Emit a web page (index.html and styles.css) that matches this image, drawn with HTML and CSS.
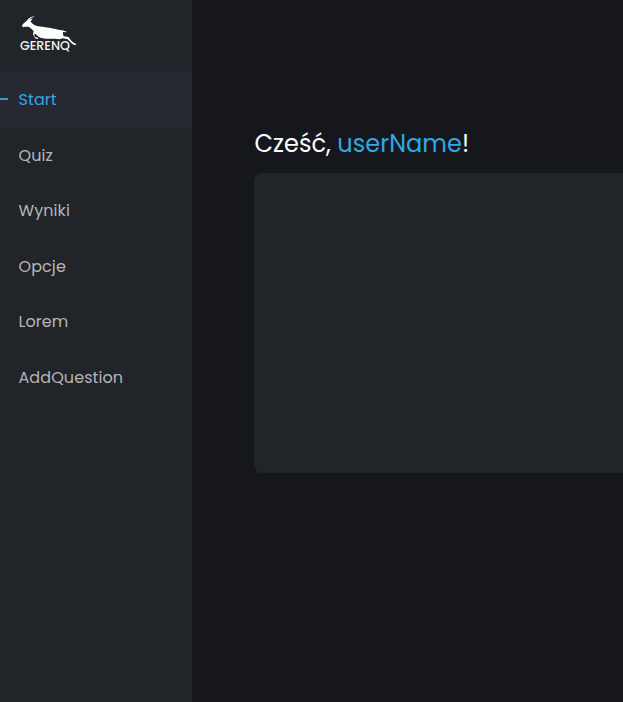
FILE: index.html
```html
<!DOCTYPE html>
<html lang="pl">
<head>
<meta charset="utf-8">
<meta name="viewport" content="width=device-width, initial-scale=1">
<title>Gerenq</title>
<link rel="stylesheet" href="styles.css">
</head>
<body>
<div class="app">
  <aside class="sidebar">
    <a class="logo" href="#">
      <svg viewBox="0 0 180 114" role="img" aria-label="Gerenq">
        <path class="animal" d="M9 34L11 28L19 21L26 14C31 8 38 5 48 3C40 7 34 10 31 15C35 12 37 12 41 10C39 15 36 17 35 20L39 25L46 30C56 35 68 34 79 37C94 39 110 43 122 45L130 46L143 50L142 52L132 51L132 58L134 64L149 66C153 74 161 83 172 87L169 91L160 87L146 73L131 70L122 73C107 69 94 73 80 71C69 70 60 69 51 58L46 56L47 65L58 69L57 72L48 70L42 58L44 49L38 42L29 35L17 35L13 37Z"/>
        <text class="wordmark" x="3" y="104" textLength="150" lengthAdjust="spacingAndGlyphs">GERENQ</text>
      </svg>
    </a>
    <nav class="menu">
      <a class="item active" href="#">Start</a>
      <a class="item" href="#">Quiz</a>
      <a class="item" href="#">Wyniki</a>
      <a class="item" href="#">Opcje</a>
      <a class="item" href="#">Lorem</a>
      <a class="item" href="#">AddQuestion</a>
    </nav>
  </aside>
  <main class="content">
    <h1 class="greeting">Cześć, <span class="user">userName</span>!</h1>
    <section class="panel"></section>
  </main>
</div>
</body>
</html>
```
FILE: styles.css
```css
* {
  box-sizing: border-box;
}

body {
  margin: 0;
  background: #16171c;
  color: #fff;
  font-family: Poppins, Inter, sans-serif;
}

.app {
  display: flex;
  height: 100vh;
}

.sidebar {
  flex: 0 0 192px;
  background: #212428;
}

.logo {
  display: block;
  height: 71.5px;
  padding: 15px 0 0 19px;
}

.logo svg {
  display: block;
  width: 60px;
  height: 38px;
  overflow: visible;
}

.animal {
  fill: #fff;
}

.wordmark {
  fill: #f2f2f2;
  font-size: 35px;
  font-weight: 500;
}

.item {
  position: relative;
  display: flex;
  align-items: center;
  height: 55.5px;
  padding: 2px 0 0 18.5px;
  color: #b5b6b7;
  font-size: 16px;
  line-height: 24px;
  letter-spacing: 0.08px;
  text-decoration: none;
}

.active {
  background: #262931;
  color: #31a8e6;
}

.active::before {
  content: "";
  position: absolute;
  left: 0;
  top: 26.5px;
  width: 8px;
  height: 2px;
  background: #359ccf;
}

.content {
  flex: 1;
  min-width: 0;
  padding: 125px 0 0 62px;
}

.greeting {
  margin: 0 0 10px;
  padding-left: 0.5px;
  font-size: 24px;
  font-weight: 400;
  line-height: 38px;
  letter-spacing: 0.03px;
  white-space: nowrap;
}

.user {
  color: #31a8e6;
}

.panel {
  height: 300px;
  border-radius: 8px 0 0 8px;
  background: #212428;
}
```
